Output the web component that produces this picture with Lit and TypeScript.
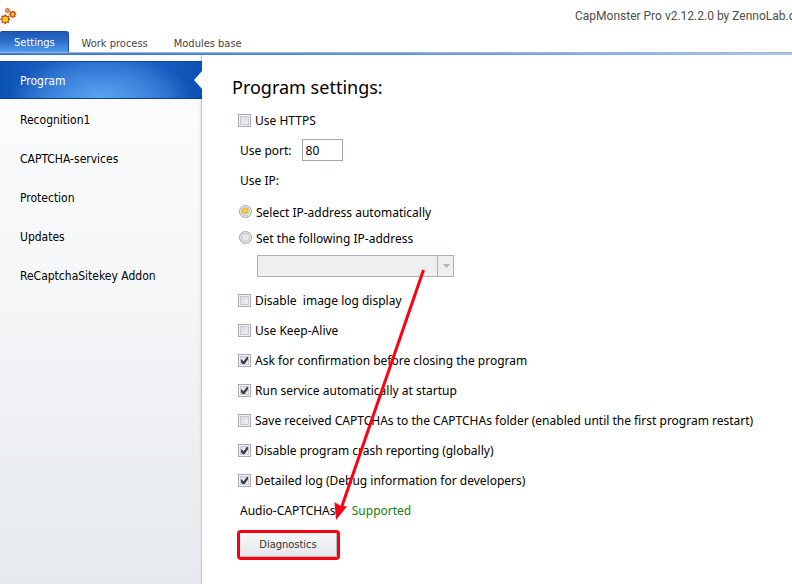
import { LitElement, html, css, svg } from "lit";
import { customElement, state } from "lit/decorators.js";

const SECTIONS = ["Program", "Recognition1", "CAPTCHA-services", "Protection", "Updates", "ReCaptchaSitekey Addon"];

const OPTIONS = [
  { label: "Disable  image log display", checked: false },
  { label: "Use Keep-Alive", checked: false },
  { label: "Ask for confirmation before closing the program", checked: true },
  { label: "Run service automatically at startup", checked: true },
  { label: "Save received CAPTCHAs to the CAPTCHAs folder (enabled until the first program restart)", checked: false },
  { label: "Disable program crash reporting (globally)", checked: true },
  { label: "Detailed log (Debug information for developers)", checked: true },
];

// One cog: a ring with eight square teeth
const cog = (cx: number, cy: number, r: number, fill: string, edge: string) => svg`
  <g transform="translate(${cx} ${cy})">
    ${[0, 45, 90, 135].map(
      (a) => svg`<rect x=${-r - 1.5} y="-0.8" width=${2 * r + 3} height="1.6" fill=${edge} transform="rotate(${a})" />`
    )}
    <circle r=${r} fill=${fill} stroke=${edge} stroke-width="1.1" />
  </g>`;

@customElement("app-header")
export class AppHeader extends LitElement {
  static styles = css`
    :host { display: block; background: #fff; }
    .bar { display: flex; align-items: center; height: 31px; }
    .logo { display: block; width: 20px; height: 31px; }
    .title {
      flex: 0 0 217px; margin-left: auto; overflow: hidden; white-space: nowrap;
      font: 12px/20px Roboto, sans-serif; color: #4d4d4d;
    }
    .tabs { display: flex; height: 21px; }
    .tab {
      border: 0; padding: 4px 13px 0; background: none; white-space: nowrap;
      font: 11px/18px "DejaVu Sans Condensed", sans-serif; color: #444;
    }
    .tab.active {
      padding: 2px 13px 0 14px; color: #fff; border: 1px solid #174ba5; border-bottom: 0;
      border-left-width: 0; border-radius: 2px 3px 0 0;
      background: linear-gradient(#1f58b4, #2a69c4 40%, #4f9cee);
    }
    .rule {
      height: 2px; border-top: 1px solid #a9b4c4;
      background: linear-gradient(90deg, #2f78dc, #5b97e8 50%, #a4c9f4);
    }
  `;
  render() {
    return html`
      <div class="bar">
        <svg class="logo" viewBox="0 0 20 31" aria-hidden="true">
          ${cog(7.5, 10.5, 1.2, "#f6dba0", "#d0834c")}
          ${cog(12.7, 14.3, 2.2, "#ffd21c", "#c4581f")}
          ${cog(5.3, 19.3, 3.4, "#ffcb12", "#b8481c")}
        </svg>
        <div class="title">CapMonster Pro v2.12.2.0 by ZennoLab.com</div>
      </div>
      <nav class="tabs">
        <button class="tab active">Settings</button>
        <button class="tab">Work process</button>
        <button class="tab">Modules base</button>
      </nav>
      <div class="rule"></div>
    `;
  }
}

@customElement("app-sidebar")
export class AppSidebar extends LitElement {
  static styles = css`
    :host {
      display: flex; flex-direction: column; gap: 1px; box-sizing: border-box; padding-top: 6px;
      background: linear-gradient(#fcfdfd, #f4f6f8 45%, #e6e9ed);
      box-shadow: inset -1px 0 #c9ccd1, inset -3px 0 2px -1px #dfe2e6;
    }
    .item {
      position: relative; box-sizing: border-box;
      width: 100%; height: 38px; padding: 2px 20px 0; border: 0; background: none;
      text-align: left; white-space: nowrap; color: #000;
      font: 12px/36px "DejaVu Sans Condensed", sans-serif;
    }
    .item.active {
      color: #fff; line-height: 34px;
      border-top: 1px solid #0f48a0; border-bottom: 1px solid #0d3f92;
      background: radial-gradient(ellipse 92px 42px at 50% 100%, #5ba5f2, #3f86de 50%, transparent),
        linear-gradient(90deg, #0b50b4, #2569c9 40%, #2569c9 60%, #0b50b4);
    }
    .item.active::after {
      content: ""; position: absolute; right: 0; top: 9px;
      border: 9px solid transparent; border-left-width: 0; border-right: 8px solid #fff;
    }
  `;
  render() {
    return html`${SECTIONS.map((s, i) => html`<button class="item ${i === 0 ? "active" : ""}">${s}</button>`)}`;
  }
}

@customElement("settings-panel")
export class SettingsPanel extends LitElement {
  static styles = css`
    :host {
      display: block; padding: 20px 16px 24px 36px; background: #fff; color: #000;
      font: 12px/20px "Noto Sans", sans-serif;
    }
    h1 { margin: 0 0 6px -6px; font-size: 18px; line-height: 24px; font-weight: 400; }
    .row { display: flex; align-items: center; height: 30px; gap: 4px; white-space: pre; }
    .row label, .row span { padding-top: 2px; }
    .indent { padding-left: 2px; gap: 10px; }
    .status { gap: 13px; }
    .radios { padding: 3px 0 5px; }
    .radios .row { height: 26px; padding-left: 1px; }
    .radios label { padding-top: 3px; }
    input { margin: 0; }
    .tick {
      appearance: none; box-sizing: border-box; width: 13px; height: 13px;
      border: 1px solid #a5abb7; background: linear-gradient(135deg, #d9dadc, #f1f1f1) content-box;
      padding: 1px; box-shadow: inset 0 0 0 1px #f2f3f5, inset 0 0 0 2px #c6c9cf;
    }
    .tick:checked {
      background: url("data:image/svg+xml,%3Csvg xmlns='http://www.w3.org/2000/svg' viewBox='0 0 11 11'%3E%3Cpath d='M2.4 5 4.7 8 8.7 2.4' fill='none' stroke='%233a3d42' stroke-width='2'/%3E%3C/svg%3E") border-box,
        linear-gradient(135deg, #dcdddf, #f4f4f4);
    }
    .dot {
      appearance: none; box-sizing: border-box; width: 13px; height: 13px; border-radius: 50%;
      border: 1px solid #9ea4b0; box-shadow: inset 0 0 0 1px #f2f3f5, inset 0 0 0 2px #bcc0c7;
      background: #e6e6e6;
    }
    .dot:checked { background: radial-gradient(circle at 45% 40%, #ffe45a, #f5a90c 3px, #f0f0f0 4px); }
    .port {
      box-sizing: border-box; width: 41px; height: 22px; padding: 0 3px; border: 1px solid #a0a6b3;
      border-radius: 0; background: #fff; color: #000; font: inherit;
    }
    .combo { display: grid; width: 197px; margin: 0 0 8px 19px; }
    .combo > * { grid-area: 1 / 1; }
    .address {
      appearance: none; width: 100%; height: 22px; border: 1px solid #abb1bd; border-radius: 0;
      background: #efefef; opacity: 1;
    }
    .drop {
      justify-self: end; box-sizing: border-box; width: 17px; height: 22px;
      border-left: 1px solid #abb1bd; display: grid; place-items: center; pointer-events: none;
    }
    .drop svg { display: block; width: 7px; height: 4px; }
    .ok { color: #128012; }
    .mark {
      display: inline-block; margin: 5px 0 0 -1px; border: 3px solid #f9000f; border-radius: 4px;
      background: #fff; vertical-align: top;
    }
    .diagnostics {
      display: block; box-sizing: border-box; width: 97px; height: 24px; padding: 0; border: 0;
      border-right: 1px solid #b4b9c3; border-bottom: 1px solid #b7bbc5; border-radius: 2px;
      background: linear-gradient(#f8f9fa, #e3e6eb); color: #333;
      font: 11px/22px "DejaVu Sans Condensed", sans-serif;
    }
  `;
  @state() private port = "80";
  render() {
    return html`
      <h1>Program settings:</h1>
      <div class="row"><input class="tick" type="checkbox" id="https" /><label for="https">Use HTTPS</label></div>
      <div class="row indent">
        <label for="port">Use port:</label><input class="port" id="port" type="text" .value=${this.port} />
      </div>
      <div class="row indent"><span id="ip">Use IP:</span></div>
      <div class="radios" role="radiogroup" aria-labelledby="ip">
        <div class="row"><input class="dot" type="radio" name="ip" id="auto" checked /><label for="auto">Select IP-address automatically</label></div>
        <div class="row"><input class="dot" type="radio" name="ip" id="manual" /><label for="manual">Set the following IP-address</label></div>
      </div>
      <div class="combo">
        <select class="address" aria-label="IP-address" disabled></select>
        <span class="drop"><svg viewBox="0 0 7 4"><path d="M0 0h7L3.5 4z" fill="#aeb2ba" /></svg></span>
      </div>
      ${OPTIONS.map(
        (o, i) => html`<div class="row"><input class="tick" type="checkbox" id="opt${i}" .checked=${o.checked} /><label for="opt${i}">${o.label}</label></div>`
      )}
      <div class="row indent status"><span>Audio-CAPTCHAs:</span><span class="ok">Supported</span></div>
      <div class="mark"><button class="diagnostics">Diagnostics</button></div>
    `;
  }
}

@customElement("app-root")
export class AppRoot extends LitElement {
  static styles = css`
    :host { display: flex; flex-direction: column; position: relative; min-height: 100vh; overflow: hidden; background: #fff; }
    .body { display: grid; grid-template-columns: 202px minmax(0, 1fr); flex: 1; }
    .arrow { position: absolute; left: 330px; top: 264px; width: 100px; height: 260px; pointer-events: none; }
  `;
  render() {
    return html`
      <app-header></app-header>
      <div class="body">
        <app-sidebar></app-sidebar>
        <settings-panel></settings-panel>
      </div>
      <svg class="arrow" viewBox="0 0 100 260" aria-hidden="true">
        <path d="M93.500 6 12 242" stroke="#ff0010" stroke-width="3" />
        <path d="M6 256 4.500 238 10 241.500 17 242.500z" fill="#ff0010" />
      </svg>
    `;
  }
}
